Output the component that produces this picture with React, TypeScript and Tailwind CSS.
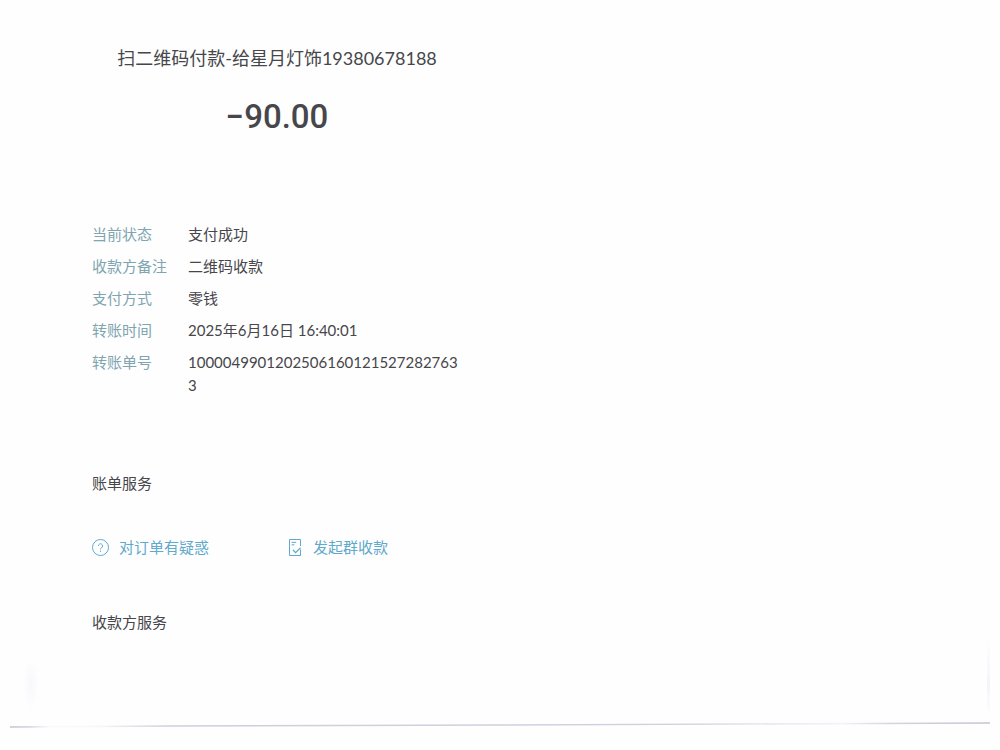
import { ReactNode } from "react";

const details = [
  { label: "当前状态", value: "支付成功" },
  { label: "收款方备注", value: "二维码收款" },
  { label: "支付方式", value: "零钱" },
  { label: "转账时间", value: "2025年6月16日 16:40:01" },
  { label: "转账单号", value: "10000499012025061601215272827633" },
];

function QuestionIcon() {
  return (
    <svg viewBox="0 0 18 18" className="size-[18px]" fill="none" stroke="currentColor" aria-hidden="true">
      <circle cx="8.5" cy="9.5" r="8" strokeWidth="1" />
      <path d="M6.4 7.9a2.1 2.1 0 1 1 3.2 1.8c-.8.5-1.1.8-1.1 1.7" strokeWidth="1" />
      <path d="M8.5 12.6v1.3" strokeWidth="1.1" />
    </svg>
  );
}

function BillIcon() {
  return (
    <svg viewBox="0 0 18 18" className="size-[18px]" fill="none" stroke="currentColor" aria-hidden="true">
      <path d="M14.5 8V1.5h-11v16h11V12" strokeWidth="1" />
      <path d="M14.5 11.5v6" strokeWidth="1" />
      <path d="M5.6 4.4h4.6M5.6 6.8h2.8" strokeWidth="1" />
      <path d="M7 12l2.6 2.6 4.9-4.8" strokeWidth="1.2" />
    </svg>
  );
}

function ServiceButton({ icon, children }: { icon: ReactNode; children: ReactNode }) {
  return (
    <button type="button" className="flex items-center gap-[9px] text-left text-[15px] leading-6 text-[#5fa9cc]">
      {icon}
      <span>{children}</span>
    </button>
  );
}

// worn paper edge under the receipt
function PaperEdge() {
  return (
    <svg viewBox="0 0 1000 110" preserveAspectRatio="none" className="block h-[110px] w-full" aria-hidden="true">
      <defs>
        <linearGradient id="edge" gradientUnits="userSpaceOnUse" x1="10" y1="0" x2="990" y2="0">
          <stop offset="0" stopColor="#c5c5d2" />
          <stop offset=".02" stopColor="#d2d2de" />
          <stop offset=".04" stopColor="#fafafd" />
          <stop offset=".09" stopColor="#f6f6fa" />
          <stop offset=".16" stopColor="#cfcfdb" />
          <stop offset=".7" stopColor="#d0d0e0" />
          <stop offset=".79" stopColor="#e8e8f2" />
          <stop offset=".85" stopColor="#f2f2fa" />
          <stop offset=".9" stopColor="#d2d2e2" />
          <stop offset="1" stopColor="#c4c4d6" />
        </linearGradient>
        <linearGradient id="side" x1="0" y1="0" x2="0" y2="1">
          <stop offset="0" stopColor="#f4f4fc" stopOpacity="0" />
          <stop offset=".6" stopColor="#f3f3fb" />
          <stop offset="1" stopColor="#f4f4fc" stopOpacity="0" />
        </linearGradient>
        <radialGradient id="smudge">
          <stop offset="0" stopColor="#f7f8fd" />
          <stop offset="1" stopColor="#f7f8fd" stopOpacity="0" />
        </radialGradient>
      </defs>
      <path d="M10 87L170 86L500 85L990 83" stroke="url(#edge)" strokeWidth="1.4" fill="none" />
      <rect x="987" y="0" width="3" height="76" fill="url(#side)" />
      <ellipse cx="31" cy="44" rx="8" ry="26" fill="url(#smudge)" />
    </svg>
  );
}

export default function App() {
  return (
    <div className="flex min-h-screen flex-col bg-[#fefefe] font-[Lato,'Noto_Sans_CJK_SC',sans-serif] text-[#46464b]">
      <main className="ml-[92px] max-w-[370px] pt-11">
        <header className="flex flex-col items-center">
          <h1 className="text-[18px] leading-7 whitespace-nowrap">扫二维码付款-给星月灯饰19380678188</h1>
          <p className="mt-6 font-[Roboto,sans-serif] text-[33px] leading-[42px] font-medium">−90.00</p>
        </header>

        <dl className="mt-[85px] flex flex-col gap-[9px] text-[15px] leading-[23px]">
          {details.map((item) => (
            <div key={item.label} className="flex">
              <dt className="w-24 shrink-0 text-[#7fa5b0]">{item.label}</dt>
              <dd className="w-[272px] break-all">{item.value}</dd>
            </div>
          ))}
        </dl>

        <section className="mt-[74px]">
          <h2 className="text-[15px] leading-6">账单服务</h2>
          <div className="mt-10 grid grid-cols-[194px_1fr]">
            <ServiceButton icon={<QuestionIcon />}>对订单有疑惑</ServiceButton>
            <ServiceButton icon={<BillIcon />}>发起群收款</ServiceButton>
          </div>
        </section>

        <section className="mt-[51px]">
          <h2 className="text-[15px] leading-6">收款方服务</h2>
        </section>
      </main>

      <footer className="mt-auto">
        <PaperEdge />
      </footer>
    </div>
  );
}
